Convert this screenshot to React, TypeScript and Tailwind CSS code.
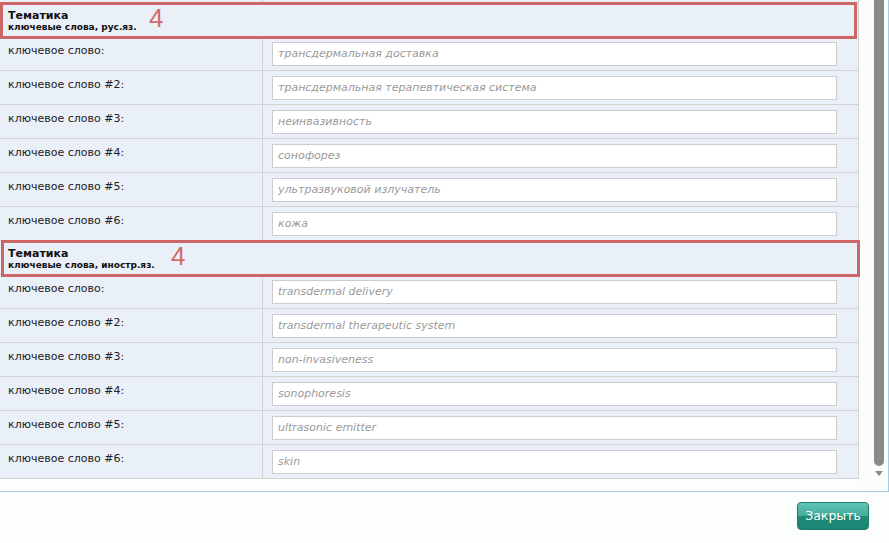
import React from "react";

const ru = [
  ["ключевое слово:", "трансдермальная доставка"],
  ["ключевое слово #2:", "трансдермальная терапевтическая система"],
  ["ключевое слово #3:", "неинвазивность"],
  ["ключевое слово #4:", "сонофорез"],
  ["ключевое слово #5:", "ультразвуковой излучатель"],
  ["ключевое слово #6:", "кожа"],
];
const en = [
  ["ключевое слово:", "transdermal delivery"],
  ["ключевое слово #2:", "transdermal therapeutic system"],
  ["ключевое слово #3:", "non-invasiveness"],
  ["ключевое слово #4:", "sonophoresis"],
  ["ключевое слово #5:", "ultrasonic emitter"],
  ["ключевое слово #6:", "skin"],
];

function Row({ label, value }: { label: string; value: string }) {
  return (
    <div className="flex h-[34px] border-b border-[#d3d3d3]">
      <div className="w-[263px] shrink-0 border-r border-[#d3d3d3] pl-[8px] pt-[6px] text-[11px] leading-[16px] text-[#222]">
        {label}
      </div>
      <div className="flex-1 pl-[9px] pr-[21px] pt-[5px]">
        <div className="h-[24px] border border-[#cccccc] bg-white pl-[5px] text-[11px] italic leading-[22px] text-[#9a9a9a]">
          {value}
        </div>
      </div>
    </div>
  );
}

function Header({ sub, numLeft, boxLeft, boxW }: { sub: string; numLeft: number; boxLeft: number; boxW: number }) {
  return (
    <div className="relative h-[34px] border-b border-[#d3d3d3] pl-[8px] pt-[7px]">
      <div className="text-[11px] font-bold leading-[12px] text-[#111]">Тематика</div>
      <div className="text-[9px] font-bold leading-[11px] text-[#111]">{sub}</div>
      <div
        className="absolute top-[-1px] h-[37px] border-[3px] border-[#cd6666]"
        style={{ left: boxLeft, width: boxW }}
      />
      <div
        className="absolute top-[0px] text-[26px] leading-[30px] text-[#d46a6a]"
        style={{ left: numLeft, fontFamily: '"Liberation Sans", sans-serif' }}
      >
        4
      </div>
    </div>
  );
}

export default function App() {
  return (
    <div
      className="flex h-[543px] w-[889px] flex-col overflow-hidden bg-[#fcfdfd]"
      style={{ fontFamily: '"DejaVu Sans", Verdana, sans-serif' }}
    >
      <div className="flex h-[491px] shrink-0">
        <div className="w-[859px] shrink-0">
          <div className="w-[859px] border-r border-[#d3d3d3] bg-[#eaf0f8]">
            <div className="flex h-[3px] border-b border-[#d3d3d3]">
              <div className="w-[263px] border-r border-[#d3d3d3]" />
            </div>
            <Header sub="ключевые слова, рус.яз." numLeft={149} boxLeft={0} boxW={857} />
            {ru.map(([l, v]) => (
              <Row key={"r" + l} label={l} value={v} />
            ))}
            <Header sub="ключевые слова, иностр.яз." numLeft={171} boxLeft={1} boxW={859} />
            {en.map(([l, v]) => (
              <Row key={"e" + l} label={l} value={v} />
            ))}
          </div>
        </div>
        <div className="flex w-[28px] shrink-0 justify-end bg-[#fbfcfc]">
          <div className="mr-[3px] flex w-[10px] flex-col items-center">
            <div className="h-[466px] w-[10px] rounded-b-[5px] bg-[#8a8a8a]" />
            <div className="mt-[5px] h-0 w-0 border-x-[4px] border-t-[5px] border-x-transparent border-t-[#8a8a8a]" />
          </div>
        </div>
        <div className="w-[2px] shrink-0 border-r border-[#a9c9e0]" />
      </div>
      <div className="flex flex-1 justify-end border-t border-[#a9c9e0] pr-[20px] pt-[10px]">
        <button className="h-[28px] w-[72px] rounded-[4px] border border-[#1b7d6d] bg-[linear-gradient(#62c4b4_0%,#45ad9d_48%,#1e8a78_52%,#1c8674_100%)] text-[12.5px] text-white">
          Закрыть
        </button>
      </div>
    </div>
  );
}
